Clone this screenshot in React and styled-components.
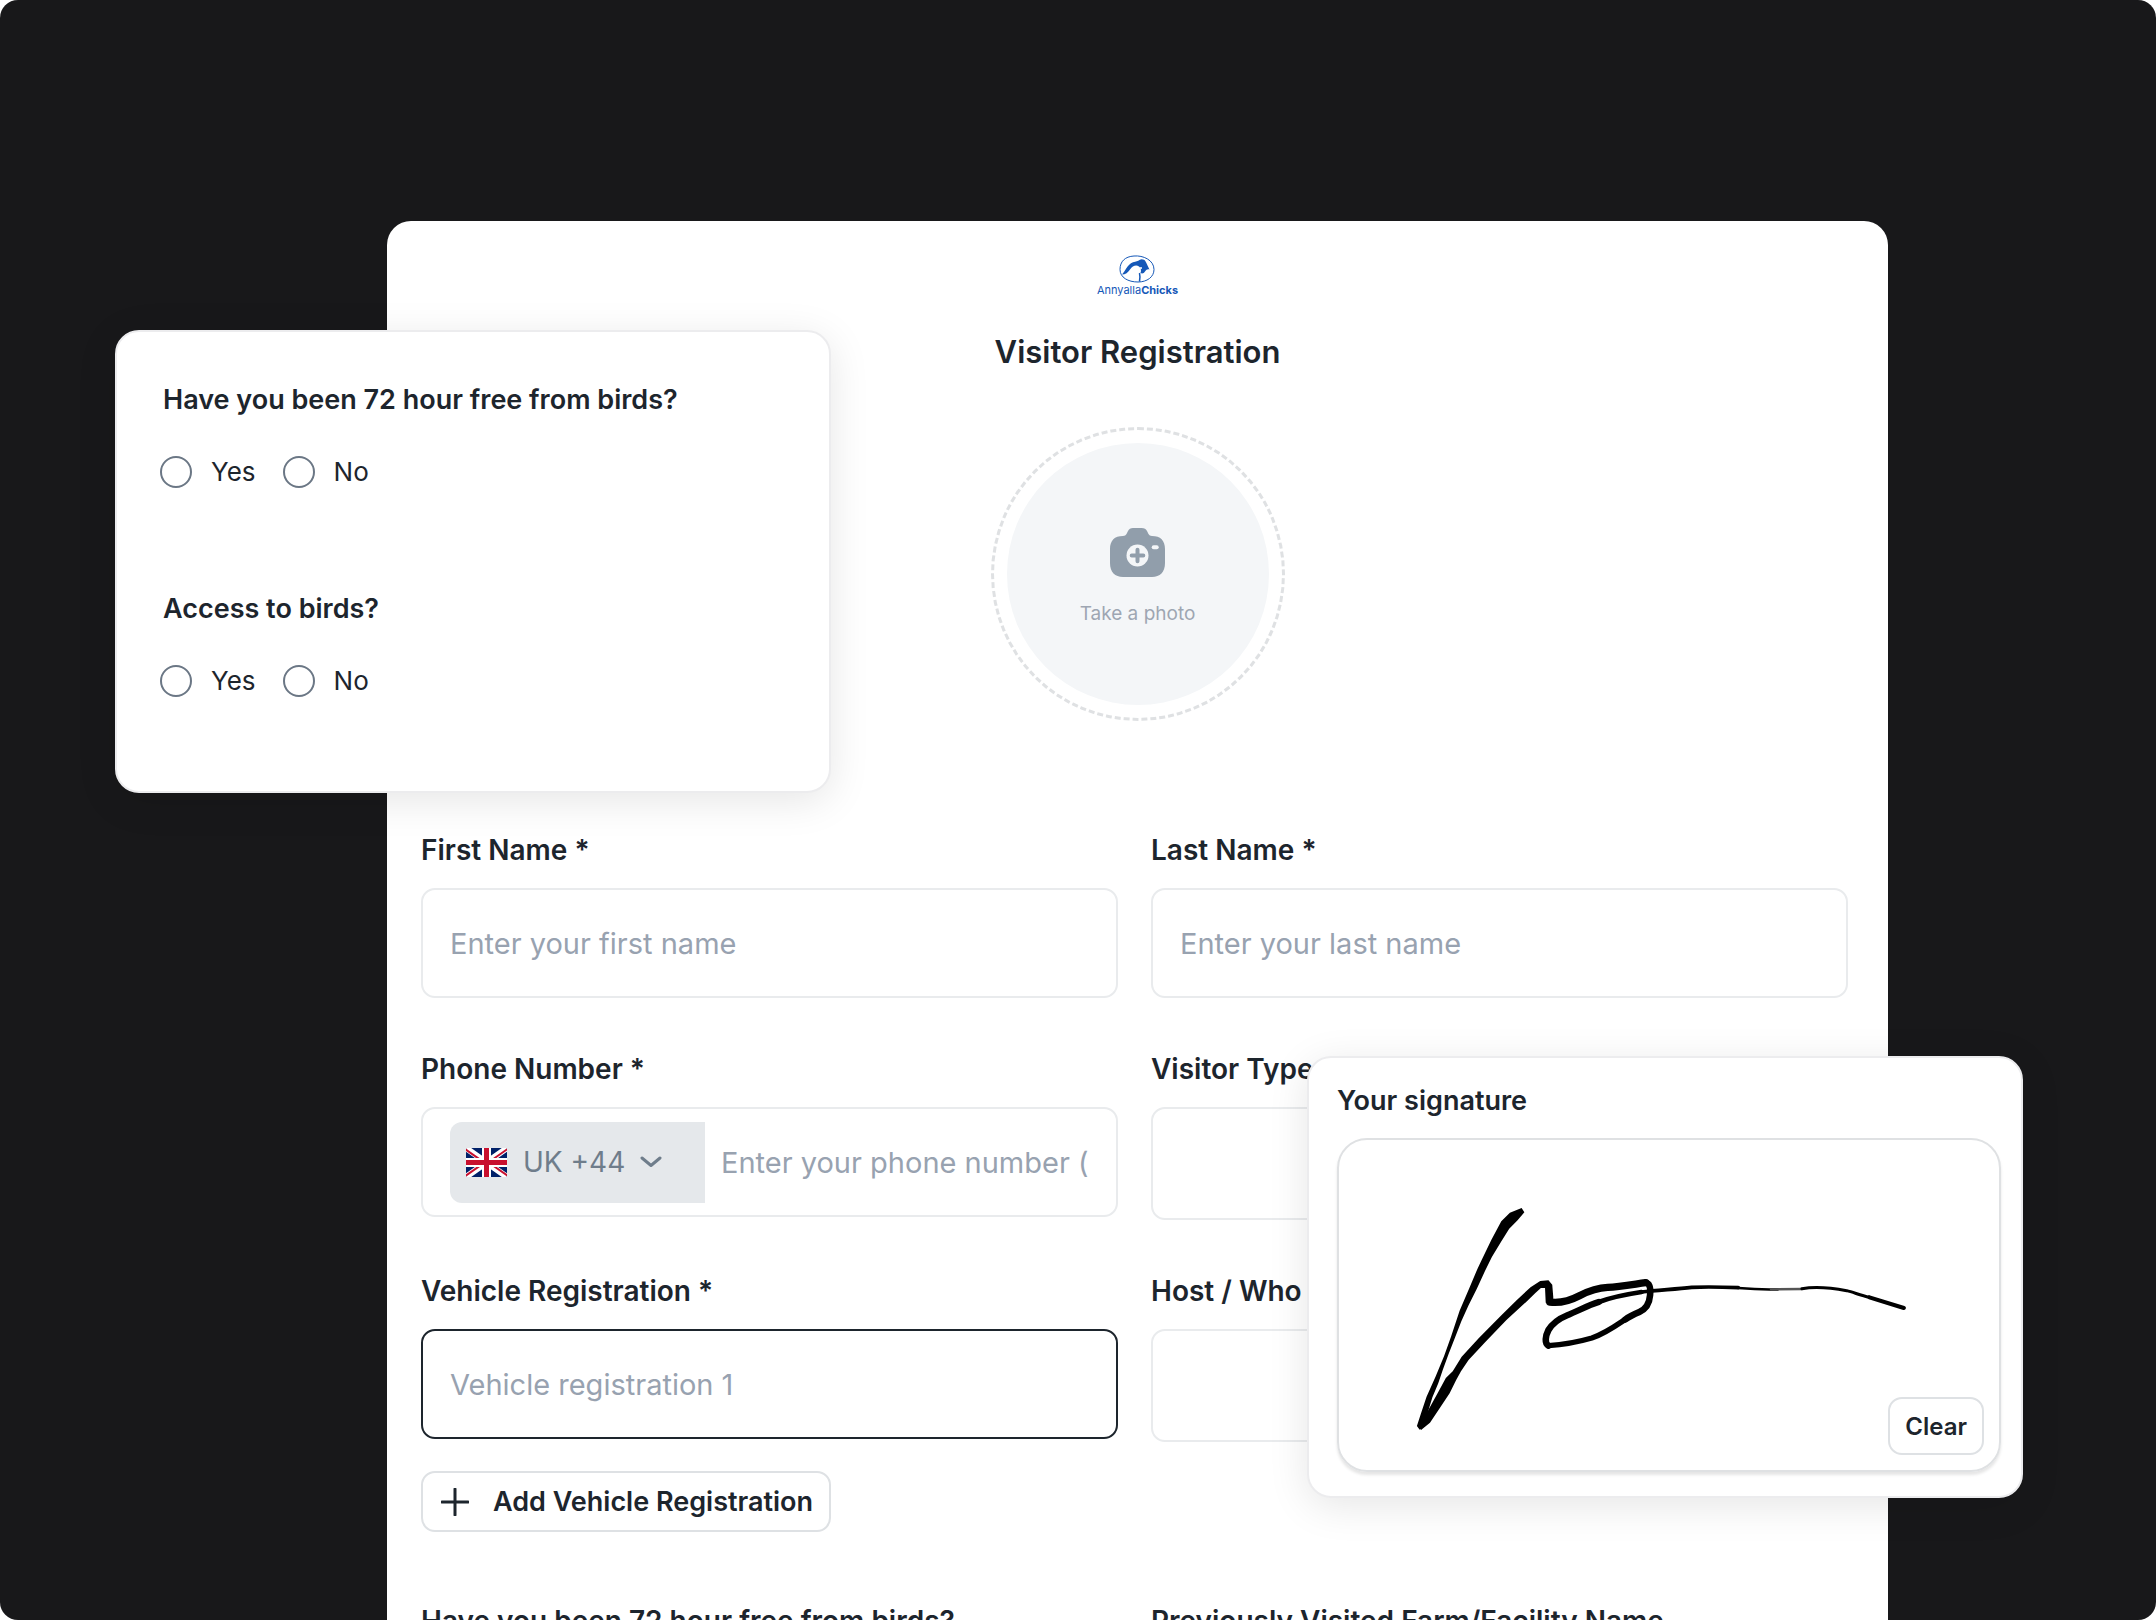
import styled, { createGlobalStyle } from "styled-components";

const GlobalStyle = createGlobalStyle`
    * {
        box-sizing: border-box;
    }
    body {
        margin: 0;
        background-color: #fff;
        color: #1d252d;
        font-family: Inter, "Liberation Sans", sans-serif;
    }
    button, input, select {
        font-family: inherit;
        color: inherit;
    }
`

const Stage = styled.main`
    position: relative;
    height: 100vh;
    overflow: hidden;
    padding: 221px 268px 0 387px;
    background-color: #18181a;
    border-radius: 18px;
`

const Sheet = styled.form`
    min-height: 100%;
    padding: 34px 0 48px;
    background-color: #fff;
    border-radius: 24px 24px 0 0;
`

const SheetHeader = styled.header`
    display: flex;
    flex-direction: column;
    align-items: center;
`

const Brand = styled.div`
    display: flex;
    flex-direction: column;
    align-items: center;
    color: #1558b8;
    font-size: 11px;
    line-height: 14px;

    svg {
        width: 36px;
        height: 28px;
    }
`

const Title = styled.h1`
    margin: 35px 0 55px;
    font-size: 31px;
    font-weight: 600;
    line-height: 40px;
`

const PhotoButton = styled.button`
    display: flex;
    width: 294px;
    height: 294px;
    padding: 13px;
    border: 3px dashed #dfe1e3;
    border-radius: 50%;
    background: none;
`

const PhotoDisc = styled.span`
    flex: 1;
    display: flex;
    flex-direction: column;
    align-items: center;
    justify-content: center;
    gap: 25px;
    padding-top: 5px;
    border-radius: 50%;
    background-color: #f4f6f8;
    color: #9ea6b2;
    font-size: 19px;
    line-height: 24px;
`

const Fields = styled.div`
    display: grid;
    grid-template-columns: 1fr 1fr;
    column-gap: 33px;
    row-gap: 55px;
    margin-top: 113px;
    padding: 0 40px 0 34px;
`

const Field = styled.div`
    display: flex;
    flex-direction: column;
    align-items: stretch;
    min-width: 0;
`

const Label = styled.label`
    margin-bottom: 22px;
    font-size: 28px;
    font-weight: 600;
    line-height: 32px;
    white-space: nowrap;
`

const boxBorder = ({ $active }) => ($active ? '#1d252d' : '#e9ebed')

const TextInput = styled.input`
    width: 100%;
    height: 110px;
    padding: 0 27px;
    border: 2px solid ${boxBorder};
    border-radius: 14px;
    background-color: #fff;
    font-size: 29px;
    outline: none;

    &::placeholder {
        color: #98a2b0;
        opacity: 1;
    }
`

const SelectBox = styled.select`
    appearance: none;
    width: 100%;
    height: 113px;
    padding: 0 27px;
    border: 2px solid #e9ebed;
    border-radius: 14px;
    background-color: #fff;
    font-size: 29px;
`

const PhoneBox = styled.div`
    display: flex;
    align-items: center;
    height: 110px;
    padding: 0 20px 0 27px;
    border: 2px solid #e9ebed;
    border-radius: 14px;

    ${TextInput} {
        flex: 1;
        min-width: 0;
        height: 80px;
        padding: 0 0 0 16px;
        border: 0;
    }
`

const Prefix = styled.div`
    display: flex;
    align-items: center;
    width: 255px;
    height: 81px;
    padding-left: 16px;
    border-radius: 12px 0 0 12px;
    background-color: #e5e8eb;
    color: #6f7d8b;

    select {
        appearance: none;
        width: 133px;
        padding: 0 0 0 16px;
        border: 0;
        background: none;
        font-size: 28px;
    }
`

const OutlineButton = styled.button`
    display: flex;
    align-items: center;
    align-self: flex-start;
    border: 2px solid #dee1e4;
    border-radius: 14px;
    background-color: #fff;
    font-weight: 600;
    white-space: nowrap;
`

const AddButton = styled(OutlineButton)`
    gap: 24px;
    height: 61px;
    margin: 32px 0 18px;
    padding: 0 16px 0 18px;
    font-size: 27px;
`

const FloatingCard = styled.section`
    position: absolute;
    width: 716px;
    border: 2px solid #ececee;
    border-radius: 24px;
    background-color: #fff;
    box-shadow: 0 8px 40px rgba(0, 0, 0, 0.1);
`

const QuestionsCard = styled(FloatingCard)`
    top: 330px;
    left: 115px;
    display: flex;
    flex-direction: column;
    gap: 105px;
    padding: 52px 43px 94px;
`

const Question = styled.fieldset`
    margin: 0;
    padding: 0;
    border: 0;

    legend {
        padding: 0 3px;
        font-size: 27px;
        font-weight: 600;
        line-height: 32px;
    }
`

const Options = styled.div`
    display: flex;
    gap: 27px;
    margin-top: 40px;
`

const Option = styled.label`
    display: flex;
    align-items: center;
    gap: 19px;
    font-size: 26px;
    line-height: 32px;
`

const Radio = styled.input`
    appearance: none;
    width: 32px;
    height: 32px;
    margin: 0;
    border: 2px solid #6b7785;
    border-radius: 50%;

    &:checked {
        border-width: 10px;
    }
`

const SignatureCard = styled(FloatingCard)`
    top: 1056px;
    right: 133px;
    padding: 27px 20px 24px 28px;
`

const CardTitle = styled.h2`
    margin: 0 0 21px;
    font-size: 27px;
    font-weight: 600;
    line-height: 32px;
`

const SignaturePad = styled.div`
    position: relative;
    height: 334px;
    padding: 40px 60px;
    border: 2px solid #dfe1e3;
    border-radius: 30px;
    box-shadow: 0 3px 3px rgba(0, 0, 0, 0.1);

    svg {
        display: block;
        width: 540px;
        height: 270px;
    }
`

const ClearButton = styled(OutlineButton)`
    position: absolute;
    right: 15px;
    bottom: 15px;
    height: 58px;
    padding: 0 15px;
    font-size: 24px;
`

function BirdLogo() {
    return (
        <svg viewBox="0 0 36 28" fill="none" aria-hidden="true">
            <path d="M15 1 C24 .2 35 5 35 14.500 C35 22 28 27 19 27 C9 27 1 22.500 1 14.500 C1 6.500 6 1.500 15 1Z" stroke="currentColor" strokeWidth="1" />
            <path d="M3 19.500 C6.500 16 8 9.500 14 7.200 C17 6.200 19 6.500 20.500 5 C22 4 23.500 4.200 25 4.800 C27 6 27.500 9 30.500 14.500 C28.500 14 27.500 14.500 26 16.500 C25 18.500 23 18.800 21.500 18 C22.500 16 22 13 20 11.500 C17 9.500 13.500 11 11 14.500 C9 17.500 6.500 19.500 3 19.500Z" fill="currentColor" />
            <path d="M20.500 18 C21.200 21 21 24 20.500 26.500" stroke="currentColor" strokeWidth="1.500" />
            <circle cx="22" cy="13" r="1" fill="#fff" />
        </svg>
    )
}

function CameraIcon() {
    return (
        <svg width="55" height="49" viewBox="0 0 55 49" aria-hidden="true">
            <path fill="#919eab" d="M23 0h8.500c3 0 4.500 1 5.500 3l1.500 3c.7 1.300 1.800 2 3.500 2 8.500 0 13 4.500 13 13v14c0 9-5 14-13 14H13C5 49 0 44 0 35V21C0 12.500 4.500 8 13 8c1.700 0 2.800-.7 3.500-2L18 3c1-2 2.500-3 5-3Z" />
            <circle cx="27.500" cy="27.500" r="11" fill="#f4f6f8" />
            <path d="M27.500 21.700v11.600M21.700 27.500h11.600" stroke="#919eab" strokeWidth="4" strokeLinecap="round" />
            <path d="M43.700 19.300h3" stroke="#f4f6f8" strokeWidth="4" strokeLinecap="round" />
        </svg>
    )
}

function UkFlag() {
    return (
        <svg width="41" height="29" viewBox="0 0 41 29" aria-hidden="true">
            <clipPath id="flag"><rect width="41" height="29" rx="1" /></clipPath>
            <g clipPath="url(#flag)">
                <path fill="#012169" d="M0 0h41v29H0z" />
                <path stroke="#fff" strokeWidth="6" d="m0 0 41 29M41 0 0 29" />
                <path stroke="#c8102e" strokeWidth="2" d="m-1 1 19 13.400M43 0 23 14M-2 29l19-13.400M24 15.500 42 28" />
                <path stroke="#fff" strokeWidth="9" d="M20.500 0v29M0 14.500h41" />
                <path stroke="#c8102e" strokeWidth="5" d="M20.500 0v29M0 14.500h41" />
            </g>
        </svg>
    )
}

function Signature() {
    return (
        <svg viewBox="0 0 1568 810" preserveAspectRatio="none" role="img" aria-label="Signature">
            {/* downstroke and the rise back up */}
            <path d="M356 84 L364 97 L345 120 L320 146 L296 186 L270 230 L250 272 L226 326 L202 376 L181 424 L163 472 L144 522 L127 570 L114 610 L97 652 L84 696 L72 738 L60 749 L52 738 L64 700 L80 650 L106 590 L131 528 L151 470 L176 392 L204 325 L228 266 L240 240 L268 180 L297 124 L322 98Z" />
            <path d="M56 740 L84 692 L112 640 L136 594 L156 574 L182 530 L232 474 L298 405 L343 359 L382 322 L410 303 L434 301 L445 314 L448 352 L446 370 L426 368 L424 324 L412 324 L396 339 L370 365 L312 420 L250 487 L202 540 L180 574 L166 600 L147 640 L120 682 L90 728 L64 750Z" />
            <g fill="none" stroke="#000" strokeLinecap="round" strokeLinejoin="round">
                <path strokeWidth="22" d="M438 366 C474 371 500 360 524 347 C556 330 580 323 606 322 C640 320 680 313 716 308" />
                <path strokeWidth="19" d="M716 308 C730 310 731 326 729 346 C727 372 716 388 698 396 C684 402 668 410 656 419" />
                <path strokeWidth="16" d="M656 419 C626 440 596 462 560 474 C520 486 480 494 434 497" />
                <path strokeWidth="19" d="M434 497 C422 490 425 468 434 450 C446 430 464 416 488 406 C520 393 548 376 580 366" />
                <path strokeWidth="14" d="M580 366 C620 350 660 343 704 336" />
                <path strokeWidth="11" d="M704 336 C750 330 800 328 850 322 C890 320 940 321 985 323" />
                <path strokeWidth="8" d="M985 324 C1030 328 1070 329 1100 328" />
                <path strokeWidth="7" stroke="#555" d="M1080 328 L1170 327" />
                <path strokeWidth="9" d="M1170 326 C1200 320 1250 322 1300 332 C1320 337 1340 346 1366 352" />
                <path strokeWidth="12" d="M1366 352 L1466 384" />
            </g>
        </svg>
    )
}

function YesNoQuestion({ name, title }) {
    return (
        <Question>
            <legend>{title}</legend>
            <Options>
                <Option><Radio type="radio" name={name} value="yes" />Yes</Option>
                <Option><Radio type="radio" name={name} value="no" />No</Option>
            </Options>
        </Question>
    )
}

function TextField({ id, label, placeholder }) {
    return (
        <Field>
            <Label htmlFor={id}>{label}</Label>
            <TextInput id={id} placeholder={placeholder} />
        </Field>
    )
}

function SelectField({ id, label }) {
    return (
        <Field>
            <Label htmlFor={id}>{label}</Label>
            <SelectBox id={id} />
        </Field>
    )
}

export default function App() {
    return (
        <>
            <GlobalStyle />
            <Stage>
                <Sheet>
                    <SheetHeader>
                        <Brand>
                            <BirdLogo />
                            <span>Annyalla<b>Chicks</b></span>
                        </Brand>
                        <Title>Visitor Registration</Title>
                        <PhotoButton type="button">
                            <PhotoDisc>
                                <CameraIcon />
                                Take a photo
                            </PhotoDisc>
                        </PhotoButton>
                    </SheetHeader>

                    <Fields>
                        <TextField id="firstName" label="First Name *" placeholder="Enter your first name" />
                        <TextField id="lastName" label="Last Name *" placeholder="Enter your last name" />

                        <Field>
                            <Label htmlFor="phone">Phone Number *</Label>
                            <PhoneBox>
                                <Prefix>
                                    <UkFlag />
                                    <select aria-label="Country code">
                                        <option>UK +44</option>
                                    </select>
                                    <svg width="22" height="12" viewBox="0 0 22 12" fill="none" aria-hidden="true">
                                        <path d="m2 2 9 7.500L20 2" stroke="currentColor" strokeWidth="3" strokeLinecap="round" strokeLinejoin="round" />
                                    </svg>
                                </Prefix>
                                <TextInput id="phone" type="tel" placeholder="Enter your phone number (" />
                            </PhoneBox>
                        </Field>
                        <SelectField id="visitorType" label="Visitor Type" />

                        <Field>
                            <Label htmlFor="vehicle">Vehicle Registration *</Label>
                            <TextInput id="vehicle" placeholder="Vehicle registration 1" $active />
                            <AddButton type="button">
                                <svg width="28" height="28" viewBox="0 0 28 28" aria-hidden="true">
                                    <path d="M14 1v26M1 14h26" stroke="currentColor" strokeWidth="3" strokeLinecap="round" />
                                </svg>
                                Add Vehicle Registration
                            </AddButton>
                        </Field>
                        <SelectField id="host" label="Host / Who" />

                        <TextField id="birdFree" label="Have you been 72 hour free from birds?" />
                        <TextField id="farm" label="Previously Visited Farm/Facility Name" />
                    </Fields>
                </Sheet>

                <QuestionsCard>
                    <YesNoQuestion name="free72" title="Have you been 72 hour free from birds?" />
                    <YesNoQuestion name="access" title="Access to birds?" />
                </QuestionsCard>

                <SignatureCard>
                    <CardTitle>Your signature</CardTitle>
                    <SignaturePad>
                        <Signature />
                        <ClearButton type="button">Clear</ClearButton>
                    </SignaturePad>
                </SignatureCard>
            </Stage>
        </>
    )
}
